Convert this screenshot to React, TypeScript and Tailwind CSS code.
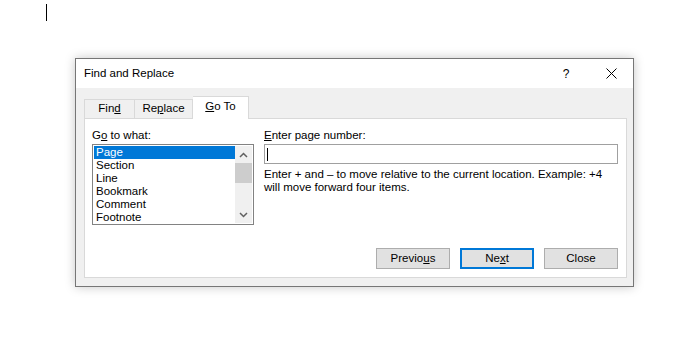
const font = { fontFamily: '"Liberation Sans", Arial, sans-serif' };

const items = ["Page", "Section", "Line", "Bookmark", "Comment", "Footnote"];

function Chevron({ up }: { up?: boolean }) {
  return (
    <svg width="9" height="6" viewBox="0 0 9 6">
      <path
        d={up ? "M1 5 L4.5 1.5 L8 5" : "M1 1 L4.5 4.5 L8 1"}
        fill="none"
        stroke="#606060"
        strokeWidth="1.5"
      />
    </svg>
  );
}

function Button({ children, primary }: { children: React.ReactNode; primary?: boolean }) {
  return (
    <div
      className={
        "w-[74px] h-[21px] flex items-center justify-center bg-[#e1e1e1] text-[11.5px] text-black " +
        (primary ? "border-2 border-[#0078d7]" : "border border-[#adadad]")
      }
    >
      {children}
    </div>
  );
}

export default function App() {
  return (
    <div className="w-[700px] h-[344px] bg-white overflow-hidden" style={font}>
      <div className="pl-[46px] pt-[4px]">
        <div className="w-px h-[17px] bg-black" />
      </div>
      <div className="ml-[75px] mt-[37px] w-[559px] h-[229px] border border-[#767676] bg-[#f0f0f0] flex flex-col shadow-[0_0_10px_rgba(0,0,0,0.22)]">
        {/* title bar */}
        <div className="h-[29px] bg-white flex items-center pl-[8px] pr-[16px] text-[11.5px] text-black">
          <span className="flex-1">Find and Replace</span>
          <span className="w-[12px] text-center mr-[34px] text-[12px]">?</span>
          <svg width="11" height="11" viewBox="0 0 11 11">
            <path d="M0.5 0.5 L10.5 10.5 M10.5 0.5 L0.5 10.5" stroke="#000" strokeWidth="1" />
          </svg>
        </div>
        {/* body */}
        <div className="flex-1 flex flex-col pl-[8px] pr-[6px] pt-[8px] pb-[8px]">
          <div className="flex items-end h-[22px] text-[11.5px] text-black relative z-10">
            <div className="w-[51px] h-[19px] border border-b-0 border-[#d9d9d9] flex items-center justify-center">
              <span>
                Fin<u>d</u>
              </span>
            </div>
            <div className="w-[58px] h-[19px] border border-b-0 border-l-0 border-[#d9d9d9] flex items-center justify-center">
              <span>
                Re<u>p</u>lace
              </span>
            </div>
            <div className="w-[56px] h-[23px] -mb-px bg-white border border-b-0 border-l-0 border-[#d9d9d9] flex items-center justify-center pb-[2px]">
              <span>
                <u>G</u>o To
              </span>
            </div>
          </div>
          <div className="flex-1 bg-white border border-[#d9d9d9] flex flex-col pl-[7px] pr-[8px] pt-[8px] text-[11.5px] text-black">
            <div className="flex gap-[10px]">
              <div className="w-[162px] flex flex-col">
                <div className="h-[16px] leading-[16px] mb-[1px]">
                  G<u>o</u> to what:
                </div>
                <div className="h-[81px] border border-[#828282] flex p-px">
                  <div className="flex-1 flex flex-col">
                    {items.map((it, i) => (
                      <div
                        key={it}
                        className={
                          "h-[13px] leading-[13px] pl-[2px] " +
                          (i === 0 ? "bg-[#0078d7] text-white" : "")
                        }
                      >
                        {it}
                      </div>
                    ))}
                  </div>
                  <div className="w-[17px] bg-[#f0f0f0] flex flex-col items-center">
                    <div className="h-[17px] flex items-center justify-center">
                      <Chevron up />
                    </div>
                    <div className="w-full h-[20px] bg-[#cdcdcd]" />
                    <div className="flex-1" />
                    <div className="h-[17px] flex items-center justify-center">
                      <Chevron />
                    </div>
                  </div>
                </div>
              </div>
              <div className="flex-1 flex flex-col">
                <div className="h-[16px] leading-[16px] mb-[1px]">
                  <u>E</u>nter page number:
                </div>
                <div className="h-[20px] border border-[#a0a0a0] flex items-center pl-[2px]">
                  <div className="w-px h-[13px] bg-black" />
                </div>
                <div className="mt-[4px] leading-[13px]">
                  Enter + and – to move relative to the current location. Example: +4
                  <br />
                  will move forward four items.
                </div>
              </div>
            </div>
            <div className="flex justify-end gap-[10px] mt-[23px]">
              <Button>
                Previo<u>u</u>s
              </Button>
              <Button primary>
                Ne<u>x</u>t
              </Button>
              <Button>Close</Button>
            </div>
          </div>
        </div>
      </div>
    </div>
  );
}
